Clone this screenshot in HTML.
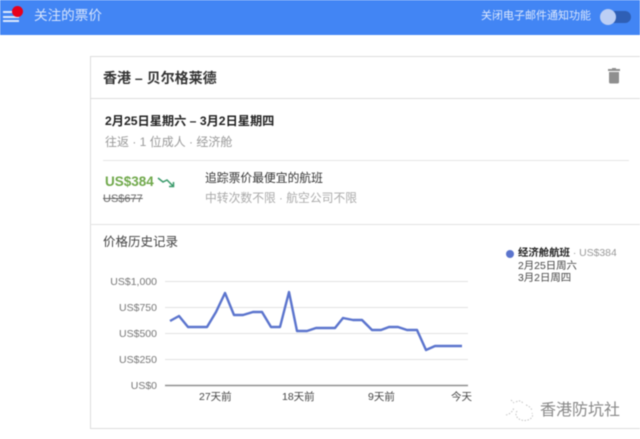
<!DOCTYPE html>
<html lang="zh">
<head>
<meta charset="utf-8">
<style>
html,body{margin:0;padding:0;background:#fff}
body{width:640px;height:439px;position:relative;overflow:hidden;font-family:"Liberation Sans","Noto Sans CJK SC",sans-serif;color:#333}
#p{position:absolute;left:0;top:0;width:640px;height:439px;filter:blur(0.4px)}
.t{position:absolute;white-space:nowrap;line-height:1}
.l{position:absolute}
svg{position:absolute;left:0;top:0}
</style>
</head>
<body>
<div id="p">
<div class="l" style="left:0;top:0;width:640px;height:35px;background:#4285f4"></div>
<div class="l" style="left:3px;top:11px;width:16px;height:2px;background:#dbe8fd"></div>
<div class="l" style="left:3px;top:16px;width:16px;height:2px;background:#dbe8fd"></div>
<div class="l" style="left:3px;top:20px;width:16px;height:2px;background:#dbe8fd"></div>
<div class="l" style="left:12px;top:6px;width:11px;height:11px;border-radius:50%;background:#e8001c"></div>
<div class="t" style="left:34px;top:9px;font-size:13.6px;color:#d5e3fc">关注的票价</div>
<div class="t" style="left:481px;top:11px;font-size:11px;color:#dbe7fd">关闭电子邮件通知功能</div>
<div class="l" style="left:603px;top:11px;width:28px;height:12px;border-radius:6px;background:#2f5fb5"></div>
<div class="l" style="left:600px;top:9px;width:16px;height:16px;border-radius:50%;background:#bccff5"></div>

<div class="l" style="left:90px;top:56px;width:550px;height:373px;border:1px solid #ddd;border-right:0;box-sizing:border-box"></div>
<div class="l" style="left:90px;top:98px;width:550px;height:1px;background:#ddd"></div>
<div class="l" style="left:90px;top:224px;width:550px;height:1px;background:#e2e2e2"></div>
<div class="l" style="left:103px;top:160px;width:526px;height:1px;background:#e6e6e6"></div>

<div class="t" style="left:103px;top:71px;font-size:14px;font-weight:bold;color:#333">香港 – 贝尔格莱德</div>
<svg width="640" height="439" viewBox="0 0 640 439">
<path d="M608 69h4v-1h4v1h4v2h-12zM609 72h10v10a1.500 1.500 0 0 1-1.500 1.500h-7a1.500 1.500 0 0 1-1.500-1.500z" fill="#8f8f8f"/>
<path d="M158 178l5 4 4-2 6 6M173.500 182v4.500h-4.500" fill="none" stroke="#3a9a6a" stroke-width="1.500"/>
<g stroke="#e2e2e2" stroke-width="1">
<path d="M165 281.500H468M165 307.500H468M165 333.500H468M165 359.500H468"/>
</g>
<path d="M165 385.500H468" stroke="#8f8f8f" stroke-width="1.500"/>
<polyline fill="none" stroke="#5b74cd" stroke-width="2.400" stroke-linejoin="round" points="170,321 179,316 188,327 207,327 216,312 225,293 234,315 243,315 253,312 262,312 271,327 280,327 289,292 297,331 307,331 316,328 335,328 343,318 353,320 362,320 372,330 381,330 389,327 398,327 407,330 417,330 426,350 435,346 462,346"/>
<circle cx="510" cy="254" r="4" fill="#5b74cd"/>
<g fill="none" stroke="#c4c4c4" stroke-width="1" stroke-dasharray="1.500 1.500">
<path d="M506 415c4-1 6-3 8-7M511 400l3 3M516 402c3-2 5-1 7 1M517 411c-2 3-1 6 2 8s8 2 11 0 3-4 2-6M526 405c3 1 5 3 6 5"/>
</g>
</svg>

<div class="t" style="left:105px;top:115px;font-size:12.200px;font-weight:bold;color:#222">2月25日星期六 – 3月2日星期四</div>
<div class="t" style="left:105px;top:136px;font-size:12px;color:#999">往返 · 1 位成人 · 经济舱</div>
<div class="t" style="left:105px;top:175px;font-size:13.500px;font-weight:bold;color:#6fa84a">US$384</div>
<div class="t" style="left:103px;top:194px;font-size:11px;color:#666;text-decoration:line-through">US$677</div>
<div class="t" style="left:205px;top:173px;font-size:11.800px;color:#333">追踪票价最便宜的航班</div>
<div class="t" style="left:205px;top:193px;font-size:11.800px;color:#aaa">中转次数不限 · 航空公司不限</div>

<div class="t" style="left:103px;top:236px;font-size:12.500px;color:#444">价格历史记录</div>
<div class="t" style="right:483px;top:277px;font-size:10.500px;color:#777">US$1,000</div>
<div class="t" style="right:483px;top:303px;font-size:10.500px;color:#777">US$750</div>
<div class="t" style="right:483px;top:329px;font-size:10.500px;color:#777">US$500</div>
<div class="t" style="right:483px;top:355px;font-size:10.500px;color:#777">US$250</div>
<div class="t" style="right:483px;top:381px;font-size:10.500px;color:#777">US$0</div>
<div class="t" style="left:199px;top:392px;font-size:10.500px;color:#444">27天前</div>
<div class="t" style="left:282px;top:392px;font-size:10.500px;color:#444">18天前</div>
<div class="t" style="left:368px;top:392px;font-size:10.500px;color:#444">9天前</div>
<div class="t" style="left:451px;top:392px;font-size:10.500px;color:#444">今天</div>

<div class="t" style="left:518px;top:249px;font-size:10.400px;color:#999"><b style="color:#222">经济舱航班</b> · US$384</div>
<div class="t" style="left:518px;top:262px;font-size:10.400px;color:#444">2月25日周六</div>
<div class="t" style="left:518px;top:274px;font-size:10.400px;color:#444">3月2日周四</div>
<div class="t" style="left:540px;top:403px;font-size:16px;color:#888">香港防坑社</div>
</div>
</body>
</html>
